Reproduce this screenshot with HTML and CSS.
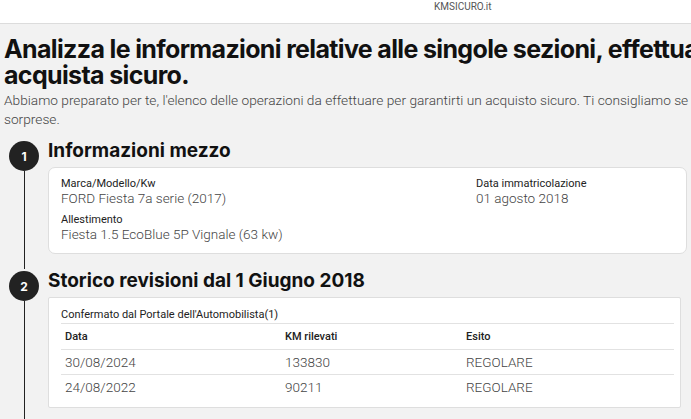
FILE: index.html
```html
<!DOCTYPE html>
<html>
<head>
  <title>KMSICURO - Report</title>
  <link rel="stylesheet" href="styles.css">
</head>
<body>
  <div class="topbar">
    <span class="brand">KMSICURO.it</span>
  </div>

  <div class="page">
    <div class="intro">
      <h1>Analizza le informazioni relative alle singole sezioni, effettua<br>acquista sicuro.</h1>
      <p>Abbiamo preparato per te, l'elenco delle operazioni da effettuare per garantirti un acquisto sicuro. Ti consigliamo se<br>sorprese.</p>
    </div>

    <div class="steps">
      <div class="step">
        <div class="step-rail">
          <span class="step-num">1</span>
          <span class="step-line"></span>
        </div>
        <div class="step-body">
          <h2>Informazioni mezzo</h2>
          <div class="card card-info">
            <div class="info-col">
              <div class="field">
                <span class="field-label">Marca/Modello/Kw</span>
                <span class="field-value">FORD Fiesta 7a serie (2017)</span>
              </div>
              <div class="field">
                <span class="field-label">Allestimento</span>
                <span class="field-value">Fiesta 1.5 EcoBlue 5P Vignale (63 kw)</span>
              </div>
            </div>
            <div class="info-col info-right">
              <div class="field">
                <span class="field-label">Data immatricolazione</span>
                <span class="field-value">01 agosto 2018</span>
              </div>
            </div>
          </div>
        </div>
      </div>

      <div class="step">
        <div class="step-rail">
          <span class="step-num">2</span>
          <span class="step-line"></span>
        </div>
        <div class="step-body">
          <h2>Storico revisioni dal 1 Giugno 2018</h2>
          <div class="card card-table">
            <p class="source">Confermato dal Portale dell'Automobilista(1)</p>
            <table class="rev-table">
              <thead>
                <tr>
                  <th class="col-date">Data</th>
                  <th class="col-km">KM rilevati</th>
                  <th>Esito</th>
                </tr>
              </thead>
              <tbody>
                <tr>
                  <td>30/08/2024</td>
                  <td>133830</td>
                  <td>REGOLARE</td>
                </tr>
                <tr>
                  <td>24/08/2022</td>
                  <td>90211</td>
                  <td>REGOLARE</td>
                </tr>
              </tbody>
            </table>
          </div>
        </div>
      </div>
    </div>
  </div>
</body>
</html>
```

FILE: styles.css
```css
* {
  box-sizing: border-box;
}

body {
  margin: 0;
  background: #f2f2f2;
  font-family: Roboto, "Liberation Sans", sans-serif;
  color: #222;
  overflow: hidden;
}

.topbar {
  height: 24px;
  background: #fff;
  border-bottom: 1px solid #dcdcdc;
  padding: 1px 0 0 434px;
}

.brand {
  display: block;
  font-size: 10px;
  line-height: 12px;
  color: #555;
}

.page {
  padding: 12px 0 0 4px;
}

.intro h1 {
  margin: 0;
  font-family: Inter, sans-serif;
  font-weight: 700;
  font-size: 25px;
  line-height: 26px;
  letter-spacing: -0.65px;
  color: #111;
  white-space: nowrap;
}

.intro p {
  margin: 3px 0 0;
  font-size: 13.7px;
  font-weight: 300;
  line-height: 19px;
  color: #444;
  white-space: nowrap;
}

.steps {
  margin-top: 10px;
}

.step {
  display: flex;
}

.step-rail {
  width: 48px;
  margin-left: -4px;
  padding-top: 2px;
  display: flex;
  flex-direction: column;
  align-items: center;
  flex-shrink: 0;
}

.step-num {
  width: 30px;
  height: 30px;
  border-radius: 50%;
  background: #222;
  color: #fff;
  font-family: Inter, sans-serif;
  font-weight: 700;
  font-size: 12px;
  display: flex;
  align-items: center;
  justify-content: center;
  flex-shrink: 0;
}

.step-line {
  flex: 1;
  width: 1px;
  background: #222;
}

.step-body {
  flex: 1;
  min-width: 0;
  padding-bottom: 15px;
}

.step-body h2 {
  margin: 0 0 4px;
  font-family: Inter, sans-serif;
  font-weight: 700;
  font-size: 19px;
  line-height: 24px;
  color: #111;
}

.card {
  background: #fff;
  border: 1px solid #dedede;
}

.card-info {
  width: 639px;
  border-radius: 7px;
  padding: 9px 12px 11px;
  display: flex;
}

.info-col {
  display: flex;
  flex-direction: column;
  gap: 7px;
  width: 415px;
}

.info-right {
  width: auto;
}

.field {
  display: flex;
  flex-direction: column;
}

.field-label {
  font-size: 11px;
  line-height: 13px;
  color: #222;
}

.field-value {
  font-size: 13.5px;
  font-weight: 300;
  line-height: 16px;
  color: #444;
}

.card-table {
  width: 633px;
  border-radius: 2px;
  padding: 10px 6px 7px 12px;
}

.source {
  margin: 0 0 1px;
  font-size: 11px;
  line-height: 14px;
  color: #222;
}

.rev-table {
  width: 100%;
  border-collapse: collapse;
}

.rev-table th,
.rev-table td {
  text-align: left;
  padding: 0 4px;
  border-top: 1px solid #e2e2e2;
}

.rev-table th {
  height: 26px;
  font-size: 11px;
  font-weight: 500;
  color: #222;
}

.rev-table td {
  height: 25px;
  font-size: 13.5px;
  font-weight: 300;
  color: #444;
}

.col-date {
  width: 220px;
}

.col-km {
  width: 181px;
}
```
